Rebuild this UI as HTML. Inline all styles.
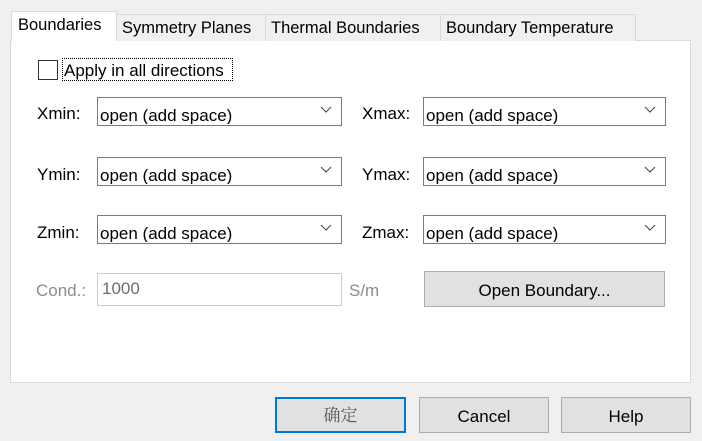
<!DOCTYPE html><html><head><style>
*{box-sizing:border-box}
body{margin:0;width:702px;height:441px;background:#f0f0f0;font-family:"Liberation Sans",sans-serif;font-size:17px;position:relative;overflow:hidden;color:#000}
.a{position:absolute}
.panel{left:10px;top:40px;width:681px;height:343px;background:#fff;border:1px solid #d9d9d9}
.tab{top:14px;height:27px;background:#f0f0f0;border:1px solid #d9d9d9;border-bottom:none;padding:4px 0 0 5px;white-space:nowrap;font-size:16.5px}
.sel{top:11px;height:30px;background:#fff;padding:4px 0 0 6px;z-index:2}
.cb{height:29px;border:1px solid #7a7a7a;background:#fff;overflow:hidden;padding:8px 0 0 2px;line-height:19px}
.cb span{display:block;height:18px;overflow:hidden}
.cb svg{position:absolute;right:9px;top:8px}
.btn{background:#e1e1e1;border:1px solid #adadad;text-align:center;line-height:34px}
</style></head><body>
<div class="a panel"></div>
<div class="a tab sel" style="left:11px;width:106px">Boundaries</div>
<div class="a tab" style="left:116px;width:150px">Symmetry Planes</div>
<div class="a tab" style="left:265px;width:176px">Thermal Boundaries</div>
<div class="a tab" style="left:440px;width:196px">Boundary Temperature</div>
<div class="a" style="left:38px;top:60px;width:20px;height:20px;border:1px solid #333;background:#fff"></div>
<div class="a" style="left:62px;top:58px;width:171px;height:23px;border:1px dotted #000;padding:2px 0 0 1px;white-space:nowrap">Apply in all directions</div>

<div class="a" style="left:37px;top:104px">Xmin:</div>
<div class="a" style="left:362px;top:104px">Xmax:</div>
<div class="a" style="left:37px;top:165px">Ymin:</div>
<div class="a" style="left:362px;top:165px">Ymax:</div>
<div class="a" style="left:37px;top:223px">Zmin:</div>
<div class="a" style="left:362px;top:223px">Zmax:</div>

<div class="a cb" style="left:97px;top:97px;width:245px"><span>open (add space)</span><svg width="12" height="7"><path d="M1 1L6 6L11 1" fill="none" stroke="#444"/></svg></div>
<div class="a cb" style="left:423px;top:97px;width:243px"><span>open (add space)</span><svg width="12" height="7"><path d="M1 1L6 6L11 1" fill="none" stroke="#444"/></svg></div>
<div class="a cb" style="left:97px;top:157px;width:245px"><span>open (add space)</span><svg width="12" height="7"><path d="M1 1L6 6L11 1" fill="none" stroke="#444"/></svg></div>
<div class="a cb" style="left:423px;top:157px;width:243px"><span>open (add space)</span><svg width="12" height="7"><path d="M1 1L6 6L11 1" fill="none" stroke="#444"/></svg></div>
<div class="a cb" style="left:97px;top:215px;width:245px"><span>open (add space)</span><svg width="12" height="7"><path d="M1 1L6 6L11 1" fill="none" stroke="#444"/></svg></div>
<div class="a cb" style="left:423px;top:215px;width:243px"><span>open (add space)</span><svg width="12" height="7"><path d="M1 1L6 6L11 1" fill="none" stroke="#444"/></svg></div>

<div class="a" style="left:36px;top:281px;color:#8c8c8c">Cond.:</div>
<div class="a" style="left:97px;top:273px;width:245px;height:33px;border:1px solid #ccc;background:#fff;color:#6d6d6d;padding:5px 0 0 4px">1000</div>
<div class="a" style="left:349px;top:281px;color:#8c8c8c">S/m</div>
<div class="a btn" style="left:424px;top:271px;width:241px;height:36px;line-height:38px">Open Boundary...</div>

<div class="a btn" style="left:275px;top:397px;width:131px;height:36px;border:2px solid #0078d7;line-height:34px;color:#555;font-family:'Liberation Sans','Noto Serif CJK SC',serif">确定</div>
<div class="a btn" style="left:419px;top:397px;width:130px;height:36px;line-height:38px">Cancel</div>
<div class="a btn" style="left:561px;top:397px;width:130px;height:36px;line-height:38px">Help</div>
</body></html>
